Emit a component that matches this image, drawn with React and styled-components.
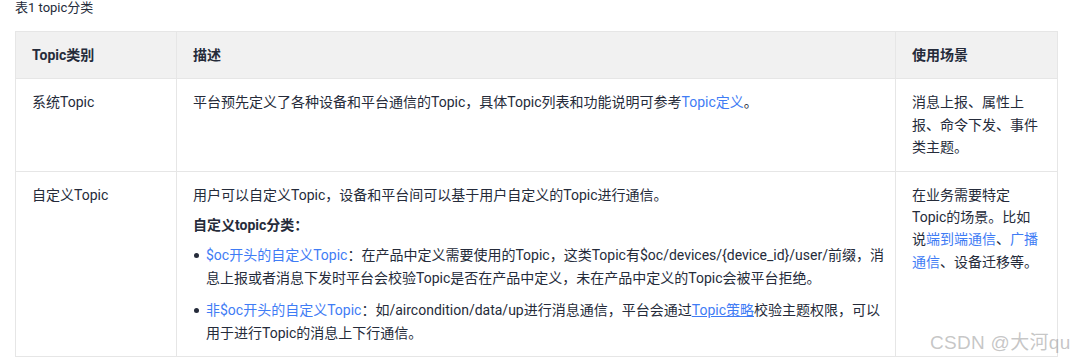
import React from "react";
import styled, { createGlobalStyle } from "styled-components";

const GlobalStyle = createGlobalStyle`
  body {
    margin: 0;
    background: #fff;
    font-family: "Roboto", "Noto Sans CJK SC", sans-serif;
    color: #252b3a;
  }
`;

const Page = styled.div`
  position: relative;
  padding: 0 17px 0 15px;
  height: 360px;
  overflow: hidden;
`;

const Caption = styled.div`
  font-size: 13px;
  line-height: 16px;
  color: #252b3a;
  margin-bottom: 15px;
`;

const Table = styled.table`
  width: 1042px;
  border-collapse: collapse;
  table-layout: fixed;
  font-size: 14px;
  line-height: 22.4px;
`;

const Th = styled.th`
  background: #f1f1f1;
  border: 1px solid #e6e6e6;
  padding: 12px 16px;
  text-align: left;
  font-weight: 700;
  vertical-align: top;
`;

const Td = styled.td`
  border: 1px solid #e6e6e6;
  padding: 12px ${(p) => (p.$tight ? 10 : 16)}px 12px 16px;
  vertical-align: top;
`;

const Para = styled.p`
  margin: 0 0 ${(p) => (p.$last ? 0 : 8)}px;
  font-weight: ${(p) => (p.$bold ? 700 : 400)};
`;

const List = styled.ul`
  list-style: none;
  margin: 0;
  padding: 0;
`;

const Item = styled.li`
  position: relative;
  padding-left: 13px;
  margin-bottom: 10px;

  &:last-child {
    margin-bottom: 0;
  }

  &::before {
    content: "";
    position: absolute;
    left: 1px;
    top: 9px;
    width: 5px;
    height: 5px;
    border-radius: 50%;
    background: #252b3a;
  }
`;

const Link = styled.a`
  color: #3f7cf5;
  text-decoration: ${(p) => (p.$underline ? "underline" : "none")};
`;

const Watermark = styled.div`
  position: absolute;
  left: 930px;
  top: 330px;
  font-family: "Liberation Sans", "Noto Sans CJK SC", sans-serif;
  font-size: 19px;
  line-height: 26px;
  color: rgba(150, 150, 150, 0.55);
  white-space: nowrap;
  letter-spacing: 0.3px;
`;

export default function App() {
  return (
    <Page>
      <GlobalStyle />
      <Caption>表1 topic分类</Caption>
      <Table>
        <colgroup>
          <col style={{ width: 161 }} />
          <col style={{ width: 719 }} />
          <col style={{ width: 162 }} />
        </colgroup>
        <thead>
          <tr>
            <Th>Topic类别</Th>
            <Th>描述</Th>
            <Th>使用场景</Th>
          </tr>
        </thead>
        <tbody>
          <tr>
            <Td>系统Topic</Td>
            <Td $tight>
              平台预先定义了各种设备和平台通信的Topic，具体Topic列表和功能说明可参考
              <Link href="#">Topic定义</Link>。
            </Td>
            <Td>消息上报、属性上报、命令下发、事件类主题。</Td>
          </tr>
          <tr>
            <Td>自定义Topic</Td>
            <Td $tight>
              <Para>用户可以自定义Topic，设备和平台间可以基于用户自定义的Topic进行通信。</Para>
              <Para $bold>自定义topic分类：</Para>
              <List>
                <Item>
                  <Link href="#">$oc开头的自定义Topic</Link>
                  ：在产品中定义需要使用的Topic，这类Topic有$oc/devices/{"{device_id}"}/user/前缀，消息上报或者消息下发时平台会校验Topic是否在产品中定义，未在产品中定义的Topic会被平台拒绝。
                </Item>
                <Item>
                  <Link href="#">非$oc开头的自定义Topic</Link>
                  ：如/aircondition/data/up进行消息通信，平台会通过
                  <Link href="#" $underline>Topic策略</Link>
                  校验主题权限，可以用于进行Topic的消息上下行通信。
                </Item>
              </List>
            </Td>
            <Td>
              在业务需要特定Topic的场景。比如说<Link href="#">端到端通信</Link>、
              <Link href="#">广播通信</Link>、设备迁移等。
            </Td>
          </tr>
        </tbody>
      </Table>
      <Watermark>CSDN @大河qu</Watermark>
    </Page>
  );
}
